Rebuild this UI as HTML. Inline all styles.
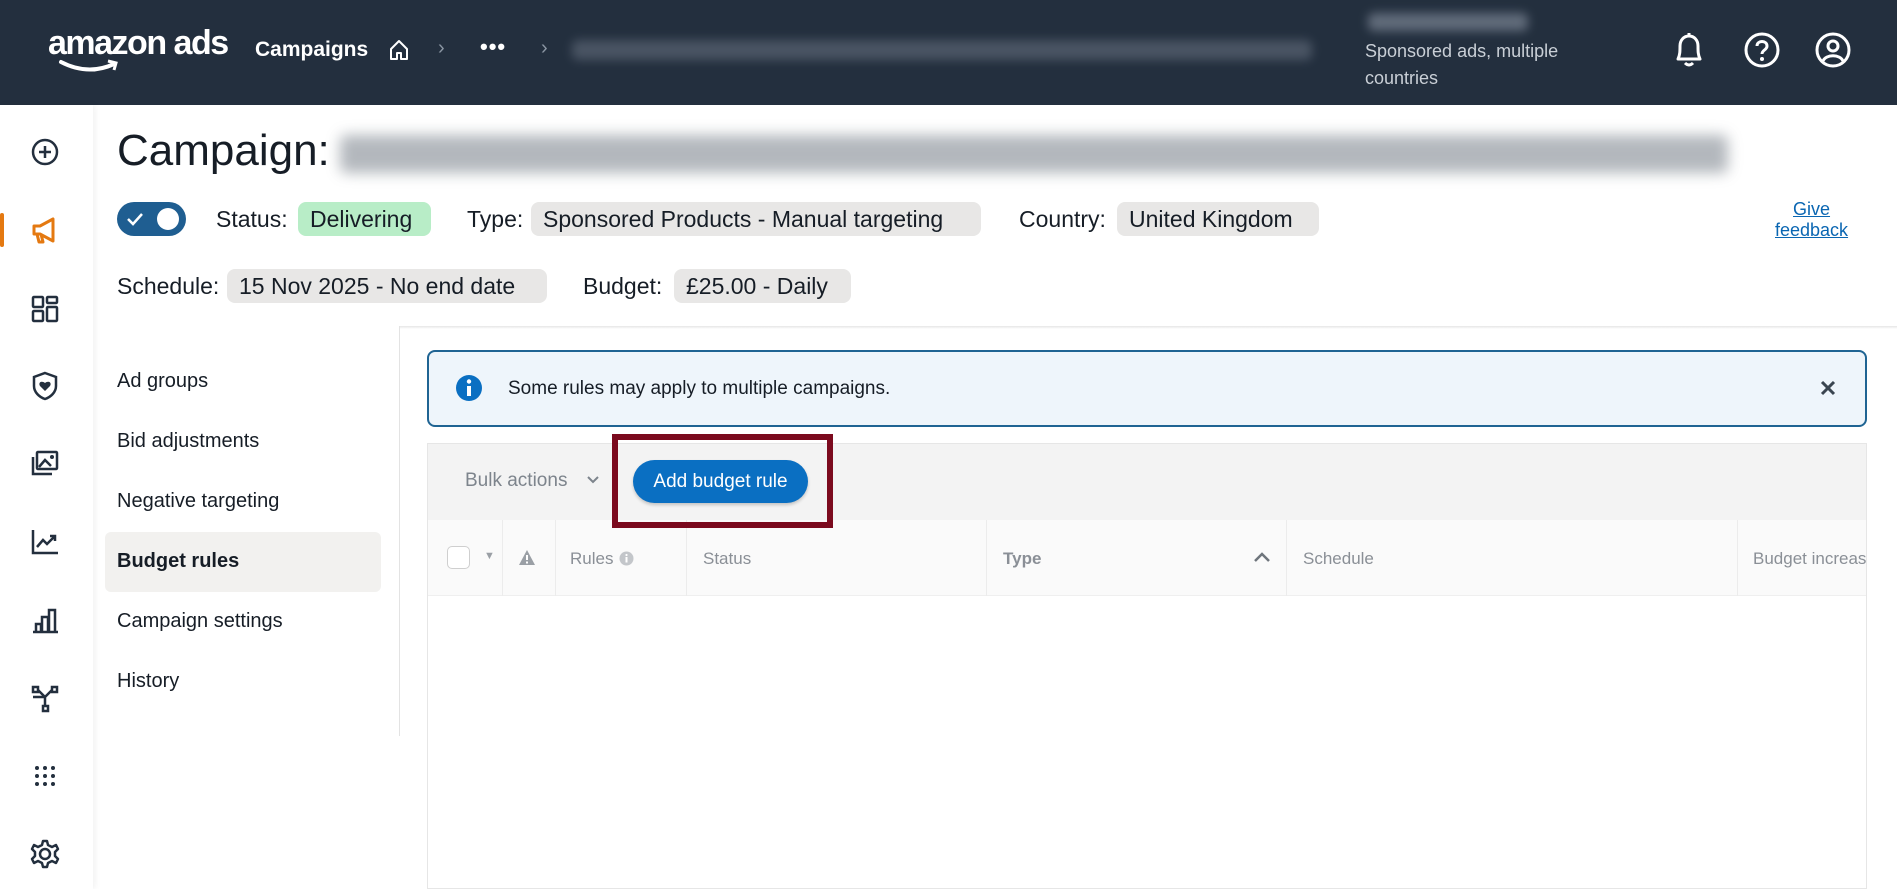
<!DOCTYPE html>
<html><head><meta charset="utf-8"><style>
*{box-sizing:border-box;margin:0;padding:0}
body{width:1897px;height:889px;overflow:hidden;background:#fff;font-family:"Liberation Sans",sans-serif;color:#161d26;position:relative}
.abs{position:absolute}
.hdr{left:0;top:0;width:1897px;height:105px;background:#232f3e}
.blur{filter:blur(5px);border-radius:6px}
.side{left:0;top:105px;width:93px;height:784px;background:#fff;box-shadow:2px 0 6px rgba(0,0,0,.06)}
.ico{position:absolute;left:29px;width:32px;height:32px}
.pill{position:absolute;background:#e8e7e6;border-radius:8px;height:34px;line-height:34px;padding:0 12px;font-size:23px;color:#161d26}
.lbl{position:absolute;font-size:23px;line-height:34px;color:#161d26}
.nav{position:absolute;left:117px;font-size:20px;color:#161d26}
.th{position:absolute;top:549px;font-size:17px;color:#8a8f96}
.sep{position:absolute;top:520px;width:1px;height:76px;background:#ececec}
</style></head><body>
<div class="abs hdr"></div>
<div class="abs" style="left:48px;top:24px;color:#fff;font-size:34px;font-weight:bold;letter-spacing:-1.5px">amazon ads</div>
<svg class="abs" style="left:58px;top:58px" width="70" height="18" viewBox="0 0 70 18"><path d="M3 4 Q30 18 56 6" stroke="#fff" stroke-width="4" fill="none" stroke-linecap="round"/><path d="M50 3 L58 5 L56 12" stroke="#fff" stroke-width="3" fill="none"/></svg>
<div class="abs" style="left:255px;top:38px;color:#fff;font-size:21px;font-weight:bold">Campaigns</div>
<svg class="abs" style="left:387px;top:38px" width="24" height="24" viewBox="0 0 24 24"><path d="M4 11 L12 3 L20 11 V21 H14 V15 H10 V21 H4Z" stroke="#fff" stroke-width="2" fill="none" stroke-linejoin="round"/></svg>
<div class="abs" style="left:438px;top:37px;color:#8b96a3;font-size:20px">›</div>
<div class="abs" style="left:480px;top:34px;color:#fff;font-size:22px;font-weight:bold;letter-spacing:1px">•••</div>
<div class="abs" style="left:541px;top:37px;color:#8b96a3;font-size:20px">›</div>
<div class="abs blur" style="left:572px;top:40px;width:740px;height:20px;background:#5a6473;opacity:.7"></div>
<div class="abs blur" style="left:1368px;top:13px;width:160px;height:18px;background:#7b8594;opacity:.7"></div>
<div class="abs" style="left:1365px;top:38px;color:#c9cfd6;font-size:18px;line-height:27px">Sponsored ads, multiple<br>countries</div>
<svg class="abs" style="left:1672px;top:31px" width="34" height="38" viewBox="0 0 34 38"><path d="M6 28 C8 24 8 20 8 15 C8 9 12 5 17 5 C22 5 26 9 26 15 C26 20 26 24 28 28 Z" stroke="#fff" stroke-width="3" fill="none" stroke-linejoin="round"/><path d="M17 2 V5 M13 32 Q17 36 21 32" stroke="#fff" stroke-width="3" fill="none"/></svg>
<svg class="abs" style="left:1744px;top:32px" width="36" height="36" viewBox="0 0 36 36"><circle cx="18" cy="18" r="16" stroke="#fff" stroke-width="3" fill="none"/><path d="M13 14 C13 8 23 8 23 14 C23 18 18 18 18 22" stroke="#fff" stroke-width="3" fill="none"/><circle cx="18" cy="27" r="2" fill="#fff"/></svg>
<svg class="abs" style="left:1815px;top:32px" width="36" height="36" viewBox="0 0 36 36"><circle cx="18" cy="18" r="16" stroke="#fff" stroke-width="3" fill="none"/><circle cx="18" cy="14" r="5" stroke="#fff" stroke-width="3" fill="none"/><path d="M8 29 C11 22 25 22 28 29" stroke="#fff" stroke-width="3" fill="none"/></svg>

<div class="abs side"></div>
<div class="abs" style="left:0;top:213px;width:4px;height:34px;background:#e47911;border-radius:2px"></div>
<svg class="ico" style="top:136px" viewBox="0 0 32 32"><circle cx="16" cy="16" r="12" stroke="#232f3e" stroke-width="2.5" fill="none"/><path d="M16 10V22M10 16H22" stroke="#232f3e" stroke-width="2.5"/></svg>
<svg class="ico" style="top:214px" viewBox="0 0 32 32"><path d="M5 12 H11 L24 5 V27 L11 20 H5Z M8 20 L10 28 H14 L12 20" stroke="#e47911" stroke-width="3" fill="none" stroke-linejoin="round"/></svg>
<svg class="ico" style="top:293px" viewBox="0 0 32 32"><g stroke="#232f3e" stroke-width="2.5" fill="none"><rect x="4" y="4" width="10" height="10" rx="1"/><rect x="18" y="4" width="10" height="6" rx="1"/><rect x="4" y="18" width="10" height="10" rx="1"/><rect x="18" y="14" width="10" height="14" rx="1"/></g></svg>
<svg class="ico" style="top:370px" viewBox="0 0 32 32"><path d="M16 3 L27 7 V16 C27 22 22 27 16 29 C10 27 5 22 5 16 V7Z" stroke="#232f3e" stroke-width="2.5" fill="none"/><path d="M16 21 L11 16 C9 13 12 10 16 13 C20 10 23 13 21 16Z" fill="#232f3e"/></svg>
<svg class="ico" style="top:447px" viewBox="0 0 32 32"><g stroke="#232f3e" stroke-width="2.5" fill="none"><rect x="8" y="5" width="20" height="17" rx="1"/><path d="M4 10 V27 H23"/><path d="M10 20 L16 13 L22 19"/></g><circle cx="23" cy="10" r="2" fill="#232f3e"/></svg>
<svg class="ico" style="top:526px" viewBox="0 0 32 32"><path d="M4 4 V27 H29 M8 21 L14 14 L18 18 L26 10 M21 10 H26 V15" stroke="#232f3e" stroke-width="2.5" fill="none"/></svg>
<svg class="ico" style="top:605px" viewBox="0 0 32 32"><path d="M4 27 H29 M7 27 V19 H12 V27 M13 27 V12 H19 V27 M20 27 V5 H26 V27" stroke="#232f3e" stroke-width="2.5" fill="none"/></svg>
<svg class="ico" style="top:682px" viewBox="0 0 32 32"><g stroke="#232f3e" stroke-width="2.5" fill="none"><rect x="4" y="5" width="5" height="5"/><rect x="23" y="5" width="5" height="5"/><rect x="14" y="24" width="5" height="5"/><path d="M9 8 L16 15 L23 8 M16 15 V24 M4 15 L16 15"/></g></svg>
<svg class="ico" style="top:760px" viewBox="0 0 32 32"><g fill="#232f3e"><circle cx="8" cy="8" r="2"/><circle cx="16" cy="8" r="2"/><circle cx="24" cy="8" r="2"/><circle cx="8" cy="16" r="2"/><circle cx="16" cy="16" r="2"/><circle cx="24" cy="16" r="2"/><circle cx="8" cy="24" r="2"/><circle cx="16" cy="24" r="2"/><circle cx="24" cy="24" r="2"/></g></svg>
<svg class="ico" style="top:838px" viewBox="0 0 32 32"><circle cx="16" cy="16" r="5" stroke="#232f3e" stroke-width="2.5" fill="none"/><path d="M14 3 H18 L19 7 L23 9 L27 7 L29 11 L26 14 V18 L29 21 L27 25 L23 23 L19 25 L18 29 H14 L13 25 L9 23 L5 25 L3 21 L6 18 V14 L3 11 L5 7 L9 9 L13 7Z" stroke="#232f3e" stroke-width="2.5" fill="none" stroke-linejoin="round"/></svg>

<div class="abs" style="left:117px;top:126px;font-size:44px;color:#161d26">Campaign:</div>
<div class="abs blur" style="left:340px;top:135px;width:1388px;height:38px;background:#9aa0a7;opacity:.75;filter:blur(7px)"></div>

<div class="abs" style="left:117px;top:202px;width:69px;height:34px;border-radius:17px;background:#1f5e91"></div>
<svg class="abs" style="left:126px;top:211px" width="18" height="16" viewBox="0 0 18 16"><path d="M2 8 L7 13 L16 3" stroke="#fff" stroke-width="2.5" fill="none"/></svg>
<div class="abs" style="left:157px;top:208px;width:22px;height:22px;border-radius:50%;background:#fff"></div>
<div class="lbl" style="left:216px;top:202px">Status:</div>
<div class="pill" style="left:298px;top:202px;width:133px;background:#b8edc7">Delivering</div>
<div class="lbl" style="left:467px;top:202px">Type:</div>
<div class="pill" style="left:531px;top:202px;width:450px">Sponsored Products - Manual targeting</div>
<div class="lbl" style="left:1019px;top:202px">Country:</div>
<div class="pill" style="left:1117px;top:202px;width:202px">United Kingdom</div>
<div class="abs" style="left:1775px;top:199px;font-size:18px;color:#0a66b2;text-decoration:underline;text-align:center;line-height:21px">Give<br>feedback</div>

<div class="lbl" style="left:117px;top:269px">Schedule:</div>
<div class="pill" style="left:227px;top:269px;width:320px">15 Nov 2025 - No end date</div>
<div class="lbl" style="left:583px;top:269px">Budget:</div>
<div class="pill" style="left:674px;top:269px;width:177px">£25.00 - Daily</div>

<div class="abs" style="left:399px;top:326px;width:1498px;height:3px;background:linear-gradient(#e6e6e6,#fff)"></div>
<div class="abs" style="left:399px;top:326px;width:1px;height:410px;background:#e3e3e3"></div>

<div class="abs" style="left:105px;top:532px;width:276px;height:60px;border-radius:6px;background:#f2f1ef"></div>
<div class="nav" style="top:370px">Ad groups</div>
<div class="nav" style="top:430px">Bid adjustments</div>
<div class="nav" style="top:490px">Negative targeting</div>
<div class="nav" style="top:550px;font-weight:bold">Budget rules</div>
<div class="nav" style="top:610px">Campaign settings</div>
<div class="nav" style="top:670px">History</div>

<div class="abs" style="left:427px;top:350px;width:1440px;height:77px;border:2.5px solid #1f6493;border-radius:8px;background:#eef5fb"></div>
<svg class="abs" style="left:455px;top:374px" width="28" height="28" viewBox="0 0 28 28"><circle cx="14" cy="14" r="13" fill="#0a6fc2"/><rect x="12" y="12" width="4" height="10" fill="#fff"/><circle cx="14" cy="7.5" r="2.2" fill="#fff"/></svg>
<div class="abs" style="left:508px;top:378px;font-size:19px;color:#161d26">Some rules may apply to multiple campaigns.</div>
<svg class="abs" style="left:1820px;top:380px" width="16" height="16" viewBox="0 0 16 16"><path d="M2 2 L14 14 M14 2 L2 14" stroke="#3a4550" stroke-width="3"/></svg>

<div class="abs" style="left:427px;top:443px;width:1440px;height:446px;border:1px solid #e6e6e6;background:#fff"></div>
<div class="abs" style="left:428px;top:444px;width:1438px;height:76px;background:#f3f3f3"></div>
<div class="abs" style="left:465px;top:470px;font-size:19px;color:#7d848c">Bulk actions</div>
<svg class="abs" style="left:586px;top:474px" width="14" height="12" viewBox="0 0 14 12"><path d="M2 3 L7 8 L12 3" stroke="#7d848c" stroke-width="2" fill="none"/></svg>
<div class="abs" style="left:633px;top:460px;width:175px;height:43px;border-radius:22px;background:#0a6fc2;color:#fff;font-size:19px;line-height:43px;text-align:center;box-shadow:0 2px 3px rgba(0,0,0,.2)">Add budget rule</div>

<div class="abs" style="left:428px;top:520px;width:1438px;height:76px;background:#fafafa;border-bottom:1px solid #efefef"></div>
<div class="sep" style="left:502px"></div><div class="sep" style="left:555px"></div><div class="sep" style="left:686px"></div><div class="sep" style="left:986px"></div><div class="sep" style="left:1286px"></div><div class="sep" style="left:1737px"></div>
<div class="abs" style="left:447px;top:546px;width:23px;height:23px;border:1.5px solid #cfcfcf;border-radius:5px;background:#fff"></div>
<div class="abs" style="left:484px;top:550px;font-size:11px;color:#9a9fa5">▼</div>
<svg class="abs" style="left:518px;top:549px" width="18" height="17" viewBox="0 0 18 17"><path d="M9 1 L17 16 H1Z" fill="#9a9fa5"/><rect x="8" y="6" width="2" height="5" fill="#fff"/><rect x="8" y="12.5" width="2" height="2" fill="#fff"/></svg>
<div class="th" style="left:570px">Rules</div>
<svg class="abs" style="left:619px;top:551px" width="15" height="15" viewBox="0 0 15 15"><circle cx="7.5" cy="7.5" r="7" fill="#c3c6ca"/><rect x="6.5" y="6" width="2" height="5.5" fill="#fff"/><circle cx="7.5" cy="4" r="1.1" fill="#fff"/></svg>
<div class="th" style="left:703px">Status</div>
<div class="th" style="left:1003px;font-weight:bold">Type</div>
<svg class="abs" style="left:1253px;top:551px" width="18" height="12" viewBox="0 0 18 12"><path d="M2 10 L9 3 L16 10" stroke="#6e757c" stroke-width="2.5" fill="none"/></svg>
<div class="th" style="left:1303px">Schedule</div>
<div class="th" style="left:1753px;width:113px;overflow:hidden;white-space:nowrap">Budget increase</div>

<div class="abs" style="left:612px;top:434px;width:221px;height:94px;border:6px solid #7b0a1e"></div>
</body></html>
